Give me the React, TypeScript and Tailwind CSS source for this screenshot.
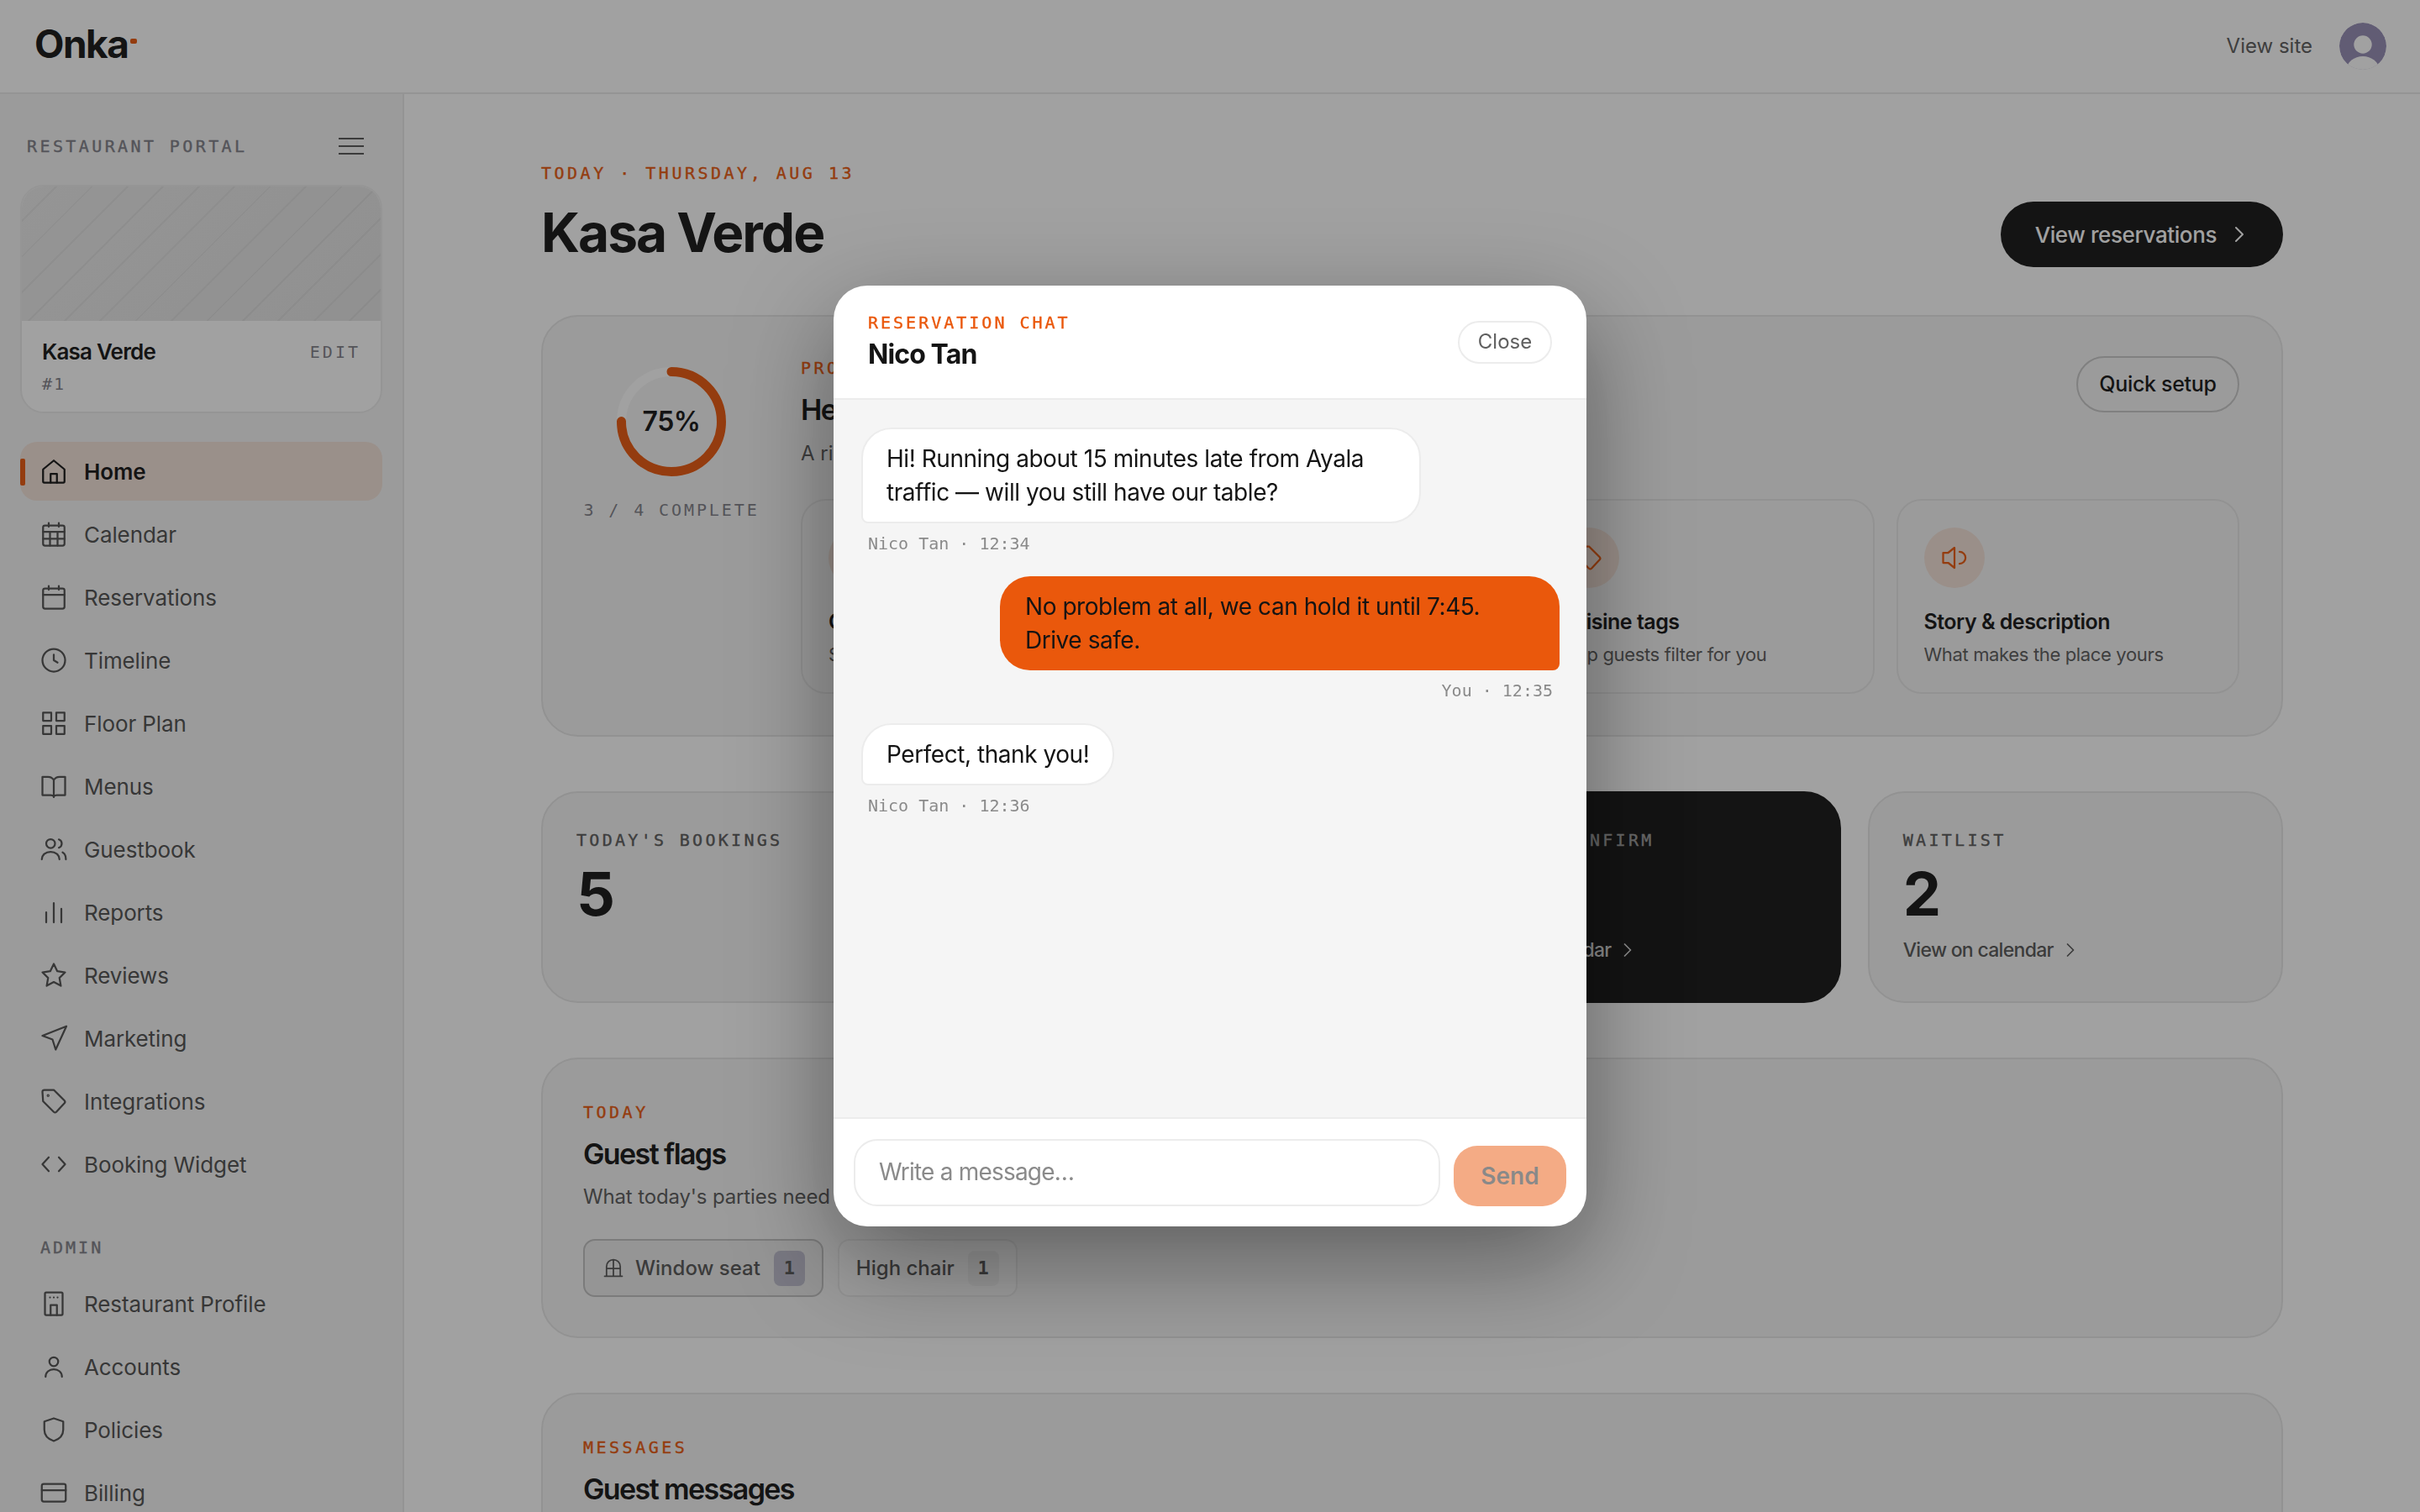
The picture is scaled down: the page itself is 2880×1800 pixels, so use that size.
import { ChevronRight } from 'lucide-react'
import type { ReactNode } from 'react'

const Ico = ({ children, size = 36 }: { children: ReactNode; size?: number }) => (
  <svg width={size} height={size} viewBox="0 0 24 24" fill="none" stroke="currentColor" strokeWidth="1.5" strokeLinecap="round" strokeLinejoin="round" className="shrink-0">
    {children}
  </svg>
)

const icons: Record<string, ReactNode> = {
  home: <><path d="M3.500 10.500 12 3.500l8.500 7V20a1 1 0 0 1-1 1h-15a1 1 0 0 1-1-1Z" /><path d="M9.500 21v-7h5v7" /></>,
  grid: <><rect x="3.500" y="5" width="17" height="16" rx="1.500" /><path d="M8 3v3M16 3v3M3.500 10h17M3.500 15.500h17M9 10v11M15 10v11" /></>,
  cal: <><rect x="3.500" y="5" width="17" height="16" rx="1.500" /><path d="M8 3v3M16 3v3M3.500 10h17" /></>,
  clock: <><circle cx="12" cy="12" r="9" /><path d="M12 7.500V12l3 1.800" /></>,
  floor: <><rect x="3.500" y="3.500" width="6.500" height="6.500" /><rect x="14" y="3.500" width="6.500" height="6.500" /><rect x="3.500" y="14" width="6.500" height="6.500" /><rect x="14" y="14" width="6.500" height="6.500" /></>,
  book: <><path d="M12 7c-1-1.500-2.500-2.500-4.500-2.500H3V19h6.500c1.200 0 2.500.7 2.500 1.500" /><path d="M12 7c1-1.500 2.500-2.500 4.500-2.500H21V19h-6.500c-1.200 0-2.500.7-2.500 1.500Z" /></>,
  users: <><circle cx="9.500" cy="7.500" r="3.500" /><path d="M2.500 20c0-3.500 3-6 7-6s7 2.500 7 6" /><path d="M16 4.200a3.500 3.500 0 0 1 0 6.600" /><path d="M19 14.500c1.600.8 2.600 2.900 2.600 5.500" /></>,
  bars: <path d="M6 20v-8M12 20V4.700M18 20V9.300" />,
  star: <path d="m12 3 2.800 5.800 6.200.9-4.500 4.400 1.100 6.300L12 17.400l-5.600 3 1.100-6.300L3 9.700l6.200-.9Z" />,
  send: <path d="M22 2.500 3 10l8 3 2.500 8Z" />,
  tag: <><path d="M3 4.500A1.500 1.500 0 0 1 4.500 3H12l8.500 8.500a1.500 1.500 0 0 1 0 2L14 20.500a1.500 1.500 0 0 1-2 0L3.500 12Z" /><circle cx="7.500" cy="7.500" r=".4" /></>,
  code: <path d="M8 6.500 3 12l5 5.500M16 6.500l5 5.500-5 5.500" />,
  building: <><rect x="5" y="3" width="14" height="18" rx="1" /><path d="M9.500 21v-8h5v8M9 7h.01M12 7h.01M15 7h.01" /></>,
  user: <><circle cx="12" cy="8" r="3.500" /><path d="M5.500 20c0-3.600 2.900-6 6.500-6s6.500 2.400 6.500 6" /></>,
  shield: <path d="m12 3 7.500 2.500V12c0 4.500-3 7.500-7.500 9-4.500-1.500-7.500-4.500-7.500-9V5.500Z" />,
  card: <><rect x="2.500" y="5" width="19" height="14" rx="1.500" /><path d="M2.500 10h19" /></>,
  speaker: <><path d="M12 4 7 8H3v8h4l5 4Z" /><path d="M16 7.250a4.750 4.750 0 0 1 0 9.500" /></>,
}

const mainNav = [
  ['Home', 'home'], ['Calendar', 'grid'], ['Reservations', 'cal'], ['Timeline', 'clock'], ['Floor Plan', 'floor'], ['Menus', 'book'],
  ['Guestbook', 'users'], ['Reports', 'bars'], ['Reviews', 'star'], ['Marketing', 'send'], ['Integrations', 'tag'], ['Booking Widget', 'code'],
]
const adminNav = [['Restaurant Profile', 'building'], ['Accounts', 'user'], ['Policies', 'shield'], ['Billing', 'card']]

const mono = "[font-family:'DejaVu_Sans_Mono',monospace]"
const heavy = '[-webkit-text-stroke:0.4px_currentColor]'

function NavItem({ label, icon, active }: { label: string; icon: string; active?: boolean }) {
  return (
    <div className={`relative flex h-[70px] shrink-0 items-center gap-[18px] rounded-[20px] pl-[22px] text-[26px] tracking-[-0.1px] ${active ? 'bg-[#ea580c]/12 font-semibold text-[#141414]' : 'text-[#4f4f4f]'}`}>
      {active && <span className="absolute left-0 top-[20px] h-[32px] w-[6px] rounded-[2px] bg-[#ea580c]" />}
      <Ico>{icons[icon]}</Ico>
      {label}
    </div>
  )
}

function Sidebar() {
  return (
    <aside className="flex w-[481px] shrink-0 flex-col overflow-hidden border-r-2 border-[#e9e9e9] bg-[#f6f6f6] pl-[24px] pr-[24px] pt-[42px]">
      <div className="flex h-[40px] shrink-0 items-center justify-between pl-[8px] pr-[22px]">
        <span className={`${mono} ${heavy} text-[20px] tracking-[3.400px] text-[#7f7f88]`}>RESTAURANT PORTAL</span>
        <svg width="30" height="22" viewBox="0 0 30 22" stroke="#555" strokeWidth="2"><path d="M0 2h30M0 11h30M0 20h30" /></svg>
      </div>
      <div className="mt-[26px] shrink-0 overflow-hidden rounded-[28px] border-2 border-[#ececec] bg-white">
        <div className="h-[160px] bg-[repeating-linear-gradient(135deg,transparent_0,transparent_28px,rgba(0,0,0,0.04)_28px,rgba(0,0,0,0.04)_30px),linear-gradient(135deg,#ebebeb,#e4e4e4)]" />
        <div className="px-[24px] pb-[19px] pt-[20px]">
          <div className="flex items-center justify-between">
            <span className="text-[26px] font-semibold leading-[34px] tracking-[-0.8px] text-[#141414]">Kasa Verde</span>
            <span className={`${mono} text-[20px] tracking-[3px] text-[#7f7f88]`}>EDIT</span>
          </div>
          <div className={`${mono} mt-[7px] text-[20px] leading-[28px] tracking-[2px] text-[#7f7f88]`}>#1</div>
        </div>
      </div>
      <nav className="mt-[34px] flex shrink-0 flex-col gap-[5px]">
        {mainNav.map(([label, icon], i) => <NavItem key={label} label={label} icon={icon} active={i === 0} />)}
      </nav>
      <div className={`${mono} ${heavy} ml-[24px] mt-[50px] shrink-0 text-[20px] leading-[28px] tracking-[3px] text-[#7f7f88]`}>ADMIN</div>
      <nav className="mt-[18px] flex shrink-0 flex-col gap-[5px]">
        {adminNav.map(([label, icon]) => <NavItem key={label} label={label} icon={icon} />)}
      </nav>
    </aside>
  )
}

const eyebrow = `${mono} ${heavy} text-[20px] leading-[28px] tracking-[3.500px] text-[#ea580c]`
const sectionCard = 'rounded-[44px] border-2 border-[#e6e6e6] bg-[#f6f6f6]'
const sectionTitle = 'mt-[14px] text-[34px] font-semibold leading-[44px] tracking-[-1.600px] text-[#141414]'

function TaskCard({ title, desc, icon }: { title: string; desc: string; icon: string }) {
  return (
    <div className="h-[232px] rounded-[30px] border-2 border-[#e6e6e6] pl-[31px] pt-[32px]">
      <div className="flex h-[72px] w-[72px] items-center justify-center rounded-full bg-[#f3e1d7] text-[#ea580c]"><Ico>{icons[icon]}</Ico></div>
      <div className="mt-[22px] text-[25px] font-semibold leading-[36px] tracking-[-0.5px] text-[#141414]">{title}</div>
      <div className="mt-[3px] whitespace-nowrap text-[22px] leading-[36px] tracking-[-0.35px] text-[#5a5a5a]">{desc}</div>
    </div>
  )
}

function Stat({ label, value, dark }: { label: string; value: string; dark?: boolean }) {
  return (
    <div className={`flex h-[252px] flex-col rounded-[44px] border-2 pl-[40px] pt-[42px] ${dark ? 'border-[#141414] bg-[#141414]' : 'border-[#e6e6e6] bg-[#f6f6f6]'}`}>
      <div className={`${mono} ${heavy} whitespace-nowrap text-[20px] leading-[28px] tracking-[3.300px] ${dark ? 'text-[#a0a0a0]' : 'text-[#5a5a5a]'}`}>{label}</div>
      <div className={`mt-[14px] text-[72px] font-bold leading-[72px] ${dark ? 'text-white' : 'text-[#141414]'}`}>{value}</div>
      {label !== "TODAY'S BOOKINGS" && (
        <div className={`mt-[13px] flex items-center gap-[6px] text-[23px] font-medium leading-[36px] tracking-[-0.7px] ${dark ? 'text-[#dddddd]' : 'text-[#555555]'}`}>
          View on calendar <ChevronRight size={28} strokeWidth={1.5} />
        </div>
      )}
    </div>
  )
}

function Chip({ label, selected }: { label: string; selected?: boolean }) {
  return (
    <div className={`flex h-[69px] items-center rounded-[14px] border-2 pl-[20px] pr-[20px] text-[24px] font-medium ${selected ? 'border-[#c0c0c0] bg-[#ebebeb] text-[#555]' : 'border-[#e9e9e9] bg-[#fafafa] text-[#555]'}`}>
      {selected && (
        <span className="mr-[12px]"><Ico size={28}><path d="M5 20V10a7 7 0 0 1 14 0v10M12 3v17M5 12h14M3 20h18" /></Ico></span>
      )}
      {label}
      <span className={`${mono} ml-[16px] flex h-[42px] w-[37px] items-center justify-center rounded-[8px] text-[22px] font-bold ${selected ? 'bg-[#bdbccc]' : 'bg-[#efefef]'}`}>1</span>
    </div>
  )
}

function Main() {
  return (
    <main className="min-w-0 flex-1 overflow-hidden bg-white px-[163px] pt-[80px]">
      <div className="flex items-end justify-between">
        <div>
          <div className={eyebrow}>TODAY · THURSDAY, AUG 13</div>
          <h1 className="mt-[16px] text-[64px] font-bold leading-[82px] tracking-[-2px] text-[#141414]">Kasa Verde</h1>
        </div>
        <button className="flex h-[78px] items-center gap-[11px] rounded-full bg-[#141414] pl-[41px] pr-[36px] text-[26px] font-medium tracking-[-0.4px] text-white">
          View reservations <ChevronRight size={32} strokeWidth={1.5} />
        </button>
      </div>

      <div className="mt-[57px] flex flex-col gap-[65px]">
        <section className={`${sectionCard} flex gap-[50px] pb-[49px] pl-[49px] pr-[50px] pt-[47px]`}>
          <div className="flex w-[208px] shrink-0 flex-col items-center pt-[13px]">
            <div className="relative h-[130px] w-[130px]">
              <svg width="130" height="130" viewBox="0 0 130 130" fill="none" strokeWidth="11">
                <circle cx="65" cy="65" r="59.500" stroke="#ffffff" />
                <circle cx="65" cy="65" r="59.500" stroke="#ea580c" strokeLinecap="round" strokeDasharray="280.400 373.800" transform="rotate(-90 65 65)" />
              </svg>
              <span className="absolute inset-0 flex items-center justify-center text-[32px] font-semibold tracking-[-0.5px] text-[#141414]">75%</span>
            </div>
            <div className={`${mono} mt-[26px] whitespace-nowrap text-[20px] leading-[28px] tracking-[2.900px] text-[#7f7f88]`}>3 / 4 COMPLETE</div>
          </div>
          <div className="min-w-0 flex-1">
            <div className="flex items-start justify-between">
              <div>
                <div className={eyebrow}>PROFILE</div>
                <div className={sectionTitle}>Help guests find you</div>
                <div className="mt-[12px] text-[24px] leading-[36px] text-[#5a5a5a]">A richer profile gets more bookings</div>
              </div>
              <button className="flex h-[67px] w-[194px] items-center justify-center rounded-full border-2 border-[#c8c8c8] text-[25px] font-medium tracking-[-0.3px] text-[#141414]">Quick setup</button>
            </div>
            <div className="mt-[36px] grid grid-cols-4 gap-[26px]">
              <TaskCard title="Cover photo" desc="Show guests the room" icon="star" />
              <TaskCard title="Opening hours" desc="When guests can book" icon="clock" />
              <TaskCard title="Cuisine tags" desc="Help guests filter for you" icon="tag" />
              <TaskCard title="Story & description" desc="What makes the place yours" icon="speaker" />
            </div>
          </div>
        </section>

        <div className="grid grid-cols-4 gap-[32px]">
          <Stat label="TODAY'S BOOKINGS" value="5" />
          <Stat label="COVERS" value="14" />
          <Stat label="LEFT TO CONFIRM" value="1" dark />
          <Stat label="WAITLIST" value="2" />
        </div>

        <section className={`${sectionCard} pb-[47px] pl-[48px] pt-[49px]`}>
          <div className={eyebrow}>TODAY</div>
          <div className={sectionTitle}>Guest flags</div>
          <div className="mt-[11px] text-[24px] leading-[36px] tracking-[-0.15px] text-[#5a5a5a]">What today's parties need — at a glance</div>
          <div className="mt-[32px] flex gap-[17px]">
            <Chip label="Window seat" selected />
            <Chip label="High chair" />
          </div>
        </section>

        <section className={`${sectionCard} pb-[48px] pl-[48px] pt-[49px]`}>
          <div className={eyebrow}>MESSAGES</div>
          <div className={sectionTitle}>Guest messages</div>
        </section>
      </div>
    </main>
  )
}

function Bubble({ text, meta, mine }: { text: ReactNode; meta: string; mine?: boolean }) {
  return (
    <div className={`flex flex-col ${mine ? 'items-end' : 'items-start'}`}>
      <div className={`w-fit max-w-[666px] rounded-[36px] text-[28px] leading-[40px] tracking-[-0.45px] text-[#141414] ${mine ? 'rounded-br-[8px] bg-[#ea580c] px-[30px] py-[16px]' : 'rounded-bl-[8px] border-2 border-[#ececec] bg-white px-[28px] py-[15px]'}`}>
        {text}
      </div>
      <div className={`${mono} mt-[10px] px-[8px] text-[20px] leading-[28px] text-[#8a8a8a]`}>{meta}</div>
    </div>
  )
}

function ChatModal() {
  return (
    <div className="fixed inset-0 flex items-center justify-center bg-[#141414]/40">
      <div className="flex h-[1120px] w-[896px] flex-col overflow-hidden rounded-[40px] bg-white shadow-[0_40px_120px_rgba(0,0,0,0.4)]">
        <header className="flex h-[136px] shrink-0 items-center justify-between border-b-2 border-[#ececec] pl-[41px] pr-[41px]">
          <div>
            <div className={`${mono} ${heavy} text-[20px] leading-[28px] tracking-[3px] text-[#ea580c]`}>RESERVATION CHAT</div>
            <div className="mt-[2px] text-[32px] font-bold leading-[44px] tracking-[-0.9px] text-[#141414]">Nico Tan</div>
          </div>
          <button className="flex h-[51px] w-[112px] items-center justify-center rounded-full border-2 border-[#ececec] text-[24px] text-[#5f5f5f]">Close</button>
        </header>
        <div className="flex min-h-0 flex-1 flex-col gap-[25px] bg-[#f5f5f5] pb-[32px] pl-[33px] pr-[32px] pt-[33px]">
          <Bubble text="Hi! Running about 15 minutes late from Ayala traffic — will you still have our table?" meta="Nico Tan · 12:34" />
          <Bubble mine text="No problem at all, we can hold it until 7:45. Drive safe." meta="You · 12:35" />
          <Bubble text="Perfect, thank you!" meta="Nico Tan · 12:36" />
        </div>
        <footer className="flex shrink-0 items-end gap-[16px] border-t-2 border-[#ececec] p-[24px]">
          <input readOnly placeholder="Write a message…" className="h-[80px] min-w-0 flex-1 rounded-[28px] border-2 border-[#ececec] pb-[2px] pl-[28px] text-[28px] tracking-[-0.8px] text-[#141414] outline-none placeholder:text-[#8a8a8a]" />
          <button className="h-[72px] w-[134px] shrink-0 rounded-[28px] bg-[#ea580c] text-[28px] font-semibold text-[#141414] opacity-50">Send</button>
        </footer>
      </div>
    </div>
  )
}

export default function App() {
  return (
    <div className="flex h-screen w-full flex-col overflow-hidden bg-white [font-family:Inter,sans-serif]">
      <header className="flex h-[112px] shrink-0 items-center justify-between border-b-2 border-[#e9e9e9] pl-[41px] pr-[40px]">
        <div className="mb-[6px] flex items-start text-[46px] font-bold leading-none tracking-[-1.500px] text-[#141414]">
          Onka<span className="ml-[3px] mt-[17px] h-[6px] w-[8px] rounded-[2px] bg-[#ea580c]" />
        </div>
        <div className="flex items-center gap-[32px]">
          <span className="text-[24px] text-[#5a5a5a]">View site</span>
          <svg width="56" height="56" viewBox="0 0 56 56" className="rounded-full">
            <circle cx="28" cy="28" r="28" fill="#948cb5" />
            <circle cx="28" cy="26" r="10.700" fill="#fff" />
            <ellipse cx="28" cy="55" rx="19" ry="15" fill="#fff" />
          </svg>
        </div>
      </header>
      <div className="flex min-h-0 flex-1">
        <Sidebar />
        <Main />
      </div>
      <ChatModal />
    </div>
  )
}
